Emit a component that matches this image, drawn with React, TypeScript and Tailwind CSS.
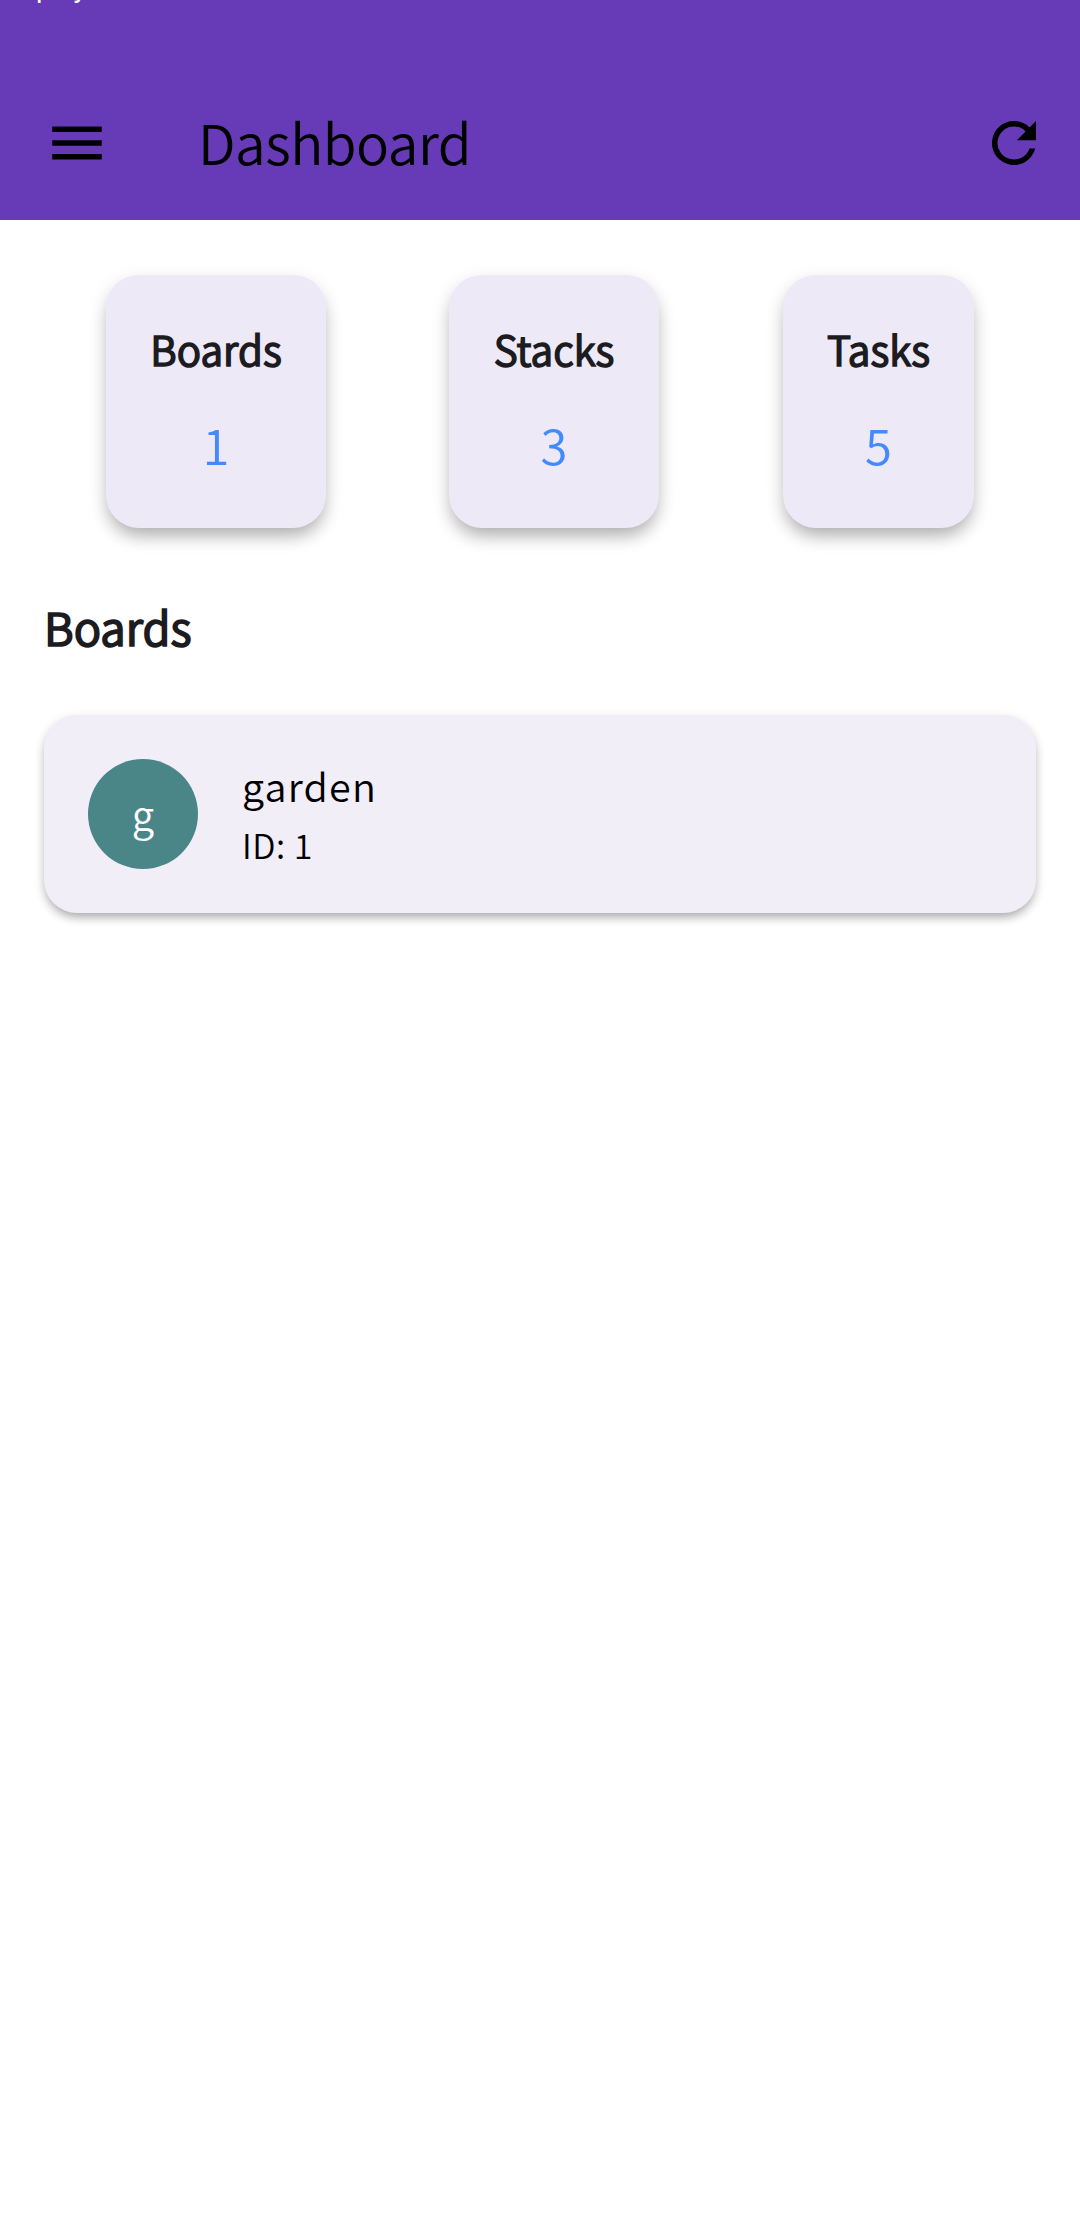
import React from "react";

const stats = [
  { label: "Boards", value: 1, box: "w-[220px] ml-[106px]" },
  { label: "Stacks", value: 3, box: "w-[210px] ml-[123px]" },
  { label: "Tasks", value: 5, box: "w-[191px] ml-[124px]" },
];

function StatCard({ label, value, box }: { label: string; value: number; box: string }) {
  return (
    <div
      className={`${box} flex h-[253px] flex-col items-center rounded-[33px] bg-[#ede9f7] shadow-[0_11px_18px_-4px_rgba(0,0,0,0.28),0_5px_20px_0_rgba(0,0,0,0.09)]`}
    >
      <span className="mt-[41px] text-[40.5px] leading-[66px] text-[#1c1b1f] [-webkit-text-stroke:1.5px_#1c1b1f]">
        {label}
      </span>
      <span className="mt-[23px] text-[49px] leading-[77px] text-[#448aff]">{value}</span>
    </div>
  );
}

export default function App() {
  return (
    <div className="flex h-[2236px] w-[1080px] flex-col overflow-hidden bg-white font-['Noto_Sans_CJK_SC',sans-serif] font-[350] text-black">
      <header className="flex h-[220px] shrink-0 flex-col bg-[#673ab7]">
        <div className="flex h-[66px] items-start overflow-hidden pl-[36px] font-[Roboto,sans-serif] text-[28px] leading-[28px] font-normal text-white">
          <span className="-mt-[26px]">play</span>
        </div>
        <div className="flex h-[154px] items-center">
          <svg viewBox="0 0 24 24" className="ml-[44px] h-[66px] w-[66px]" fill="currentColor">
            <path d="M3 18h18v-2H3v2zm0-5h18v-2H3v2zm0-7v2h18V6H3z" />
          </svg>
          <h1 className="-mt-[4px] ml-[88px] text-[55px] leading-[80px] font-[350] tracking-[-0.5px]">
            Dashboard
          </h1>
          <svg viewBox="0 0 24 24" className="mr-[33px] ml-auto h-[66px] w-[66px]" fill="currentColor">
            <path d="M17.65 6.35A7.96 7.96 0 0 0 12 4a8 8 0 1 0 7.73 10h-2.08A6 6 0 1 1 12 6c1.66 0 3.14.69 4.22 1.78L13 11h7V4l-2.35 2.35z" />
          </svg>
        </div>
      </header>
      <main>
        <section className="flex pt-[55px]">
          {stats.map((s) => (
            <StatCard key={s.label} {...s} />
          ))}
        </section>
        <h2 className="mt-[61px] ml-[44px] text-[45.5px] leading-[74px] font-[350] text-[#1c1b1f] [-webkit-text-stroke:1.7px_#1c1b1f]">
          Boards
        </h2>
        <section className="mx-[44px] mt-[52px] flex h-[198px] items-center rounded-[33px] bg-[#f1eef8] pl-[44px] shadow-[0_6px_11px_-3px_rgba(0,0,0,0.32),0_3px_12px_0_rgba(0,0,0,0.1)]">
          <div className="flex h-[110px] w-[110px] items-center justify-center rounded-full bg-[#4a8587] text-[40px] leading-[60px] text-white">
            g
          </div>
          <div className="-mt-[4px] ml-[44px] flex flex-col">
            <span className="text-[39.5px] leading-[66px] tracking-[1.2px]">garden</span>
            <span className="text-[34px] leading-[54px] tracking-[0.5px]">ID: 1</span>
          </div>
        </section>
      </main>
    </div>
  );
}
